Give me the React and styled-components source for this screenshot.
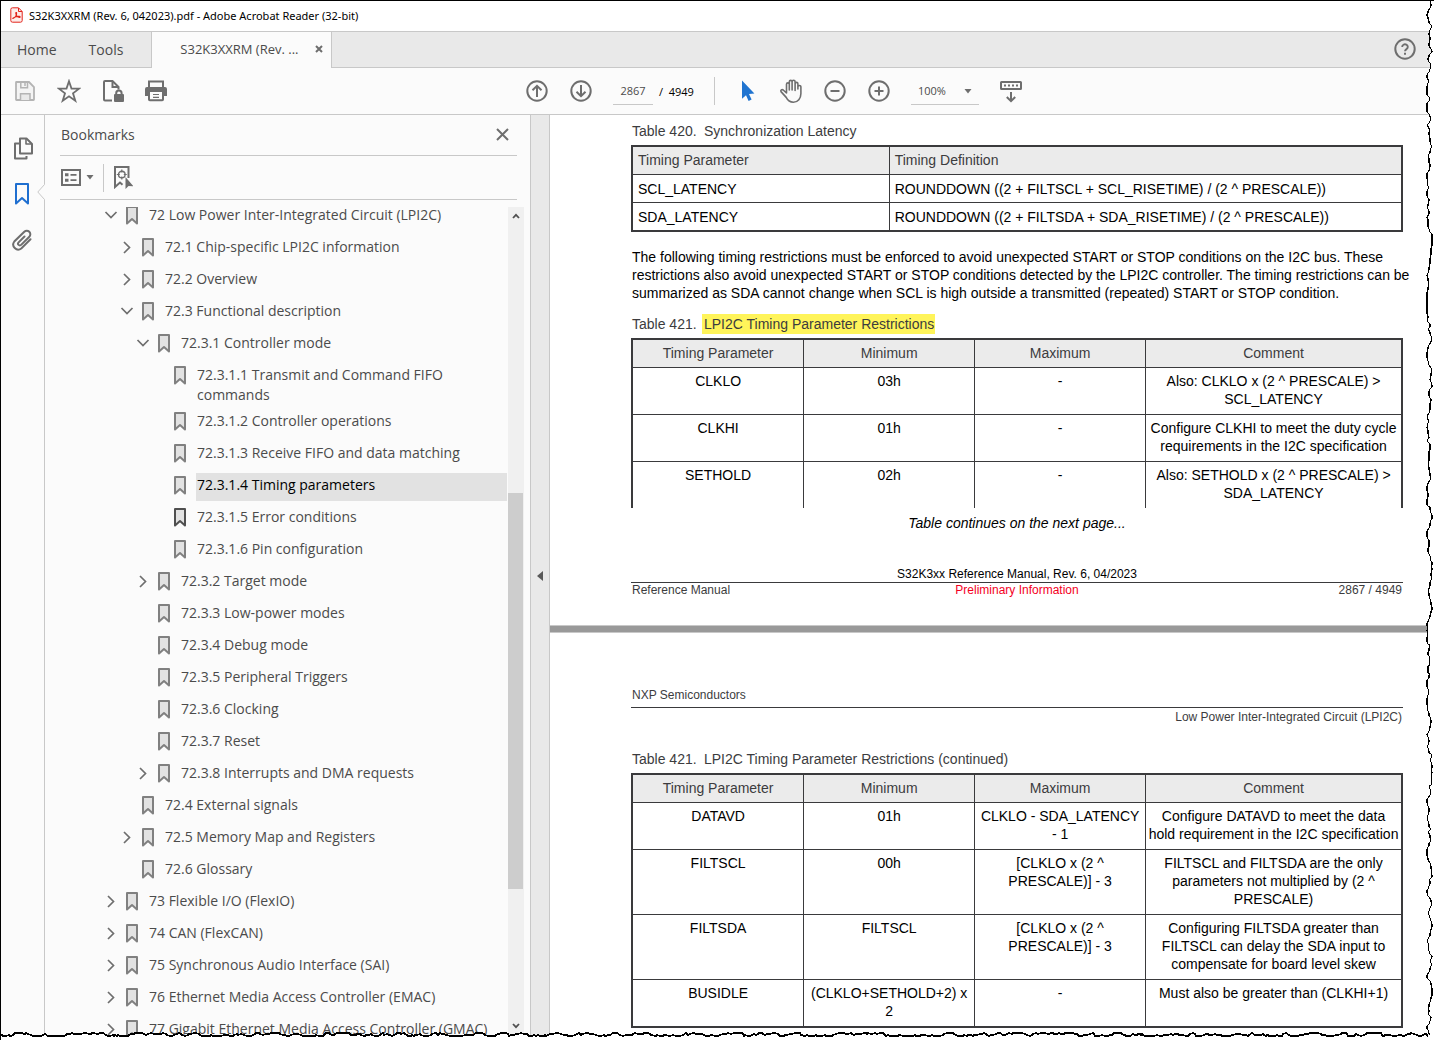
import React from "react";
import styled, { createGlobalStyle, css } from "styled-components";

const UI_FONT = '"Open Sans", "Noto Sans", sans-serif';
const DOC_FONT = '"Liberation Sans", Arial, sans-serif';
const LINE = "#c8c8c8";
const ICON = "#6e6e6e";

const GlobalStyle = createGlobalStyle`
  *, *::before, *::after { box-sizing: border-box; }
  body { margin: 0; background: #ffffff; font-family: ${UI_FONT}; }
  button, input, select { font: inherit; color: inherit; }
`;

/* ---------- shell ---------- */

const Shell = styled.div`
  position: relative;
  display: flex;
  flex-direction: column;
  height: 100vh;
  overflow: hidden;
  border-top: 1px solid #000;
  border-left: 1px solid #000;
  background: #fff;
  color: #4b4b4b;
`;

const TitleBar = styled.header`
  display: flex;
  align-items: center;
  gap: 6px;
  height: 31px;
  padding: 0 0 2px 9px;
  border-bottom: 1px solid ${LINE};
  background: #fff;
  color: #000;
  font-family: "Noto Sans", "Open Sans", sans-serif;
  font-size: 11px;
  flex: none;
`;

const TabBar = styled.nav`
  display: flex;
  height: 36px;
  background: #e9e9e9;
  box-shadow: inset 0 -1px 0 ${LINE};
  font-size: 14px;
  flex: none;
`;

const PlainButton = styled.button`
  display: inline-flex;
  align-items: center;
  justify-content: center;
  padding: 0;
  border: 0;
  background: none;
  cursor: pointer;
`;

const TabLink = styled(PlainButton)`
  padding: 0 16px 2px;
`;

const ActiveTab = styled.div`
  display: flex;
  align-items: center;
  justify-content: space-between;
  width: 181px;
  margin-left: 12px;
  padding: 0 8px 2px 28px;
  border: solid ${LINE};
  border-width: 0 1px;
  background: #fbfbfb;
  font-size: 13px;
`;

const HelpButton = styled(PlainButton)`
  margin-left: auto;
  margin-right: 17px;
  padding-bottom: 2px;
`;

const Toolbar = styled.div`
  display: flex;
  align-items: center;
  height: 47px;
  padding-left: 12px;
  border-bottom: 1px solid ${LINE};
  background: #fbfbfb;
  font-size: 12px;
  flex: none;
`;

const ToolGroup = styled.div`
  display: flex;
  align-items: center;
  gap: 20px;
  margin-left: ${(p) => p.$offset || 0}px;
`;

const IconButton = styled(PlainButton)`
  width: 24px;
  height: 24px;
  flex: none;
`;

const PageField = styled.label`
  display: flex;
  align-items: center;
  gap: 6px;
  color: #000;
  white-space: pre;
  font-size: 11px;
`;

const PageInput = styled.input`
  width: 40px;
  height: 28px;
  padding: 0;
  border: 0;
  border-bottom: 1px solid ${LINE};
  background: none;
  color: #4b4b4b;
  text-align: center;
  outline: none;
`;

const Separator = styled.span`
  width: 1px;
  height: 28px;
  background: ${LINE};
  flex: none;
`;

const ZoomField = styled.label`
  position: relative;
  display: flex;
  align-items: center;
  svg { position: absolute; right: 7px; pointer-events: none; }
`;

const ZoomSelect = styled.select`
  appearance: none;
  width: 68px;
  height: 28px;
  padding: 0 0 0 7px;
  border: 0;
  border-bottom: 1px solid ${LINE};
  border-radius: 0;
  background: none;
  font-size: 11px;
  outline: none;
`;

/* ---------- side panel ---------- */

const Body = styled.div`
  display: flex;
  flex: 1;
  min-height: 0;
`;

const Rail = styled.nav`
  position: relative;
  display: flex;
  flex-direction: column;
  align-items: center;
  gap: 22px;
  width: 44px;
  padding: 21px 1px 0 0;
  border-right: 1px solid ${LINE};
  background: #fbfbfb;
  flex: none;
`;

const Notch = styled.svg`
  position: absolute;
  top: 69px;
  right: -1px;
`;

const Panel = styled.aside`
  display: flex;
  flex-direction: column;
  width: 485px;
  background: #fbfbfb;
  flex: none;
`;

const PanelHead = styled.div`
  display: flex;
  align-items: center;
  justify-content: space-between;
  height: 41px;
  margin: 0 13px 0 15px;
  padding: 0 8px 2px 1px;
  border-bottom: 1px solid ${LINE};
  flex: none;
`;

const PanelTitle = styled.h2`
  margin: 0;
  font-size: 14px;
  font-weight: 400;
`;

const PanelTools = styled.div`
  display: flex;
  align-items: center;
  gap: 9px;
  height: 44px;
  margin: 0 13px 0 15px;
  padding-left: 1px;
  border-bottom: 1px solid ${LINE};
  flex: none;
`;

const OptionsButton = styled(PlainButton)`
  gap: 5px;
`;

const PanelScroll = styled.div`
  display: flex;
  flex: 1;
  min-height: 0;
  margin: 7px 6px 0 0;
  overflow: hidden;
`;

const Tree = styled.ul`
  flex: 1;
  margin: -8px 1px 0 0;
  padding: 0;
  list-style: none;
`;

const TreeRow = styled.li`
  display: flex;
  align-items: flex-start;
  padding-left: ${(p) => 59 + p.$level * 16}px;
`;

const Toggle = styled(PlainButton)`
  width: 14px;
  height: 32px;
  flex: none;
`;

const TreeIcon = styled.span`
  display: flex;
  align-items: center;
  width: 30px;
  height: 32px;
  padding-left: 8px;
  flex: none;
`;

const TreeLabel = styled.a`
  flex: 1;
  min-height: 28px;
  margin-top: 4px;
  padding: 2px 4px 0 1px;
  background: ${(p) => (p.$selected ? "#e2e2e2" : "none")};
  color: ${(p) => (p.$selected ? "#000" : "#4b4b4b")};
  font-size: 14px;
  line-height: 20px;
  text-decoration: none;
`;

const ScrollBar = styled.div`
  display: flex;
  flex-direction: column;
  width: 16px;
  padding-bottom: 5px;
  background: #f0f0f0;
  flex: none;
`;

const ScrollArrow = styled(PlainButton)`
  width: 15px;
  height: 18px;
  flex: none;
`;

const ScrollSpace = styled.span`
  flex: ${(p) => p.$size};
`;

const ScrollThumb = styled.span`
  flex: 397;
  width: 15px;
  background: #cdcdcd;
`;

const Splitter = styled.div`
  display: flex;
  align-items: center;
  justify-content: center;
  width: 20px;
  padding-bottom: 3px;
  border: solid ${LINE};
  border-width: 0 1px;
  background: #e9e9e9;
  flex: none;
`;

/* ---------- document ---------- */

const Document = styled.main`
  flex: 1;
  min-width: 0;
  background: #fff;
  color: #000;
  font-family: ${DOC_FONT};
  font-size: 14px;
  line-height: 18px;
`;

const Sheet = styled.section`
  padding: ${(p) => p.$top}px 31px ${(p) => p.$bottom || 0}px 81px;
`;

const PageGap = styled.div`
  height: 8px;
  border: solid #c8c8c8;
  border-width: 1px 0;
  background: #999;
`;

const DataTable = styled.table`
  width: 100%;
  table-layout: fixed;
  border-collapse: collapse;
  border: 2px solid #3a3a3c;
  text-align: ${(p) => p.$align || "center"};
  ${(p) => p.$open && css`border-bottom: 0;`}
`;

const Caption = styled.caption`
  padding: 0 0 5px 1px;
  color: #3c3c3e;
  text-align: left;
`;

const CaptionNumber = styled.span`
  display: inline-block;
  width: 70px;
`;

const CaptionTitle = styled.span`
  padding: 2px 1px 2px 2px;
  background: ${(p) => (p.$marked ? "#fff45a" : "none")};
`;

const HeadCell = styled.th`
  padding: 4px 5px 5px;
  border: 1px solid #3a3a3c;
  background: #ebebeb;
  color: #3c3c3e;
  font-weight: 400;
`;

const Cell = styled.td`
  padding: ${(p) => (p.$tight ? "5px 4px 4px 5px" : "4px 1px 6px")};
  border: 1px solid #3a3a3c;
  vertical-align: top;
`;

const Paragraph = styled.p`
  margin: 16px 0 13px 1px;
  white-space: nowrap;
`;

const Continues = styled.p`
  margin: 6px 0 0;
  text-align: center;
  font-style: italic;
`;

const Running = styled.div`
  display: grid;
  grid-template-columns: 1fr auto 1fr;
  padding: 0 1px;
  color: #3c3c3e;
  font-size: 12px;
  line-height: 14px;
`;

const FooterTitle = styled.p`
  margin: 35px 0 0;
  padding-bottom: 1px;
  border-bottom: 1px solid #3a3a3c;
  font-size: 12px;
  line-height: 14px;
  text-align: center;
`;

const Red = styled.span`
  color: #f4001e;
`;

const EndText = styled.span`
  text-align: right;
`;

const HeaderName = styled.p`
  margin: 0;
  padding: 0 0 5px 1px;
  border-bottom: 1px solid #3a3a3c;
  color: #3c3c3e;
  font-size: 12px;
  line-height: 14px;
`;

const HeaderChapter = styled.p`
  margin: 2px 0 26px;
  padding-right: 1px;
  color: #3c3c3e;
  font-size: 12px;
  line-height: 14px;
  text-align: right;
`;

/* ---------- torn paper edge ---------- */

const TornRight = styled.svg`
  position: absolute;
  top: -1px;
  right: 0;
  width: 10px;
  height: calc(100% - 4px);
`;

const TornBottom = styled.svg`
  position: absolute;
  left: 0;
  bottom: 0;
  width: calc(100% - 6px);
  height: 10px;
`;

const TornCorner = styled.span`
  position: absolute;
  right: 0;
  bottom: 0;
  width: 6px;
  height: 5px;
  background: #fff;
`;

function tornPoints(length, seed, low, high) {
  let s = seed;
  const next = () => {
    s = (s * 16807) % 2147483647;
    return s / 2147483647;
  };
  const points = [];
  let along = 0;
  let depth = (low + high) / 2;
  let drift = 1;
  while (along < length) {
    points.push([along, Math.round(depth)]);
    along += 1 + Math.floor(next() * 3);
    if (next() < 0.28) drift = -drift;
    depth += drift * next() * 1.5;
    if (depth < low) { depth = low; drift = 1; }
    if (depth > high) { depth = high; drift = -1; }
  }
  return points;
}

const RIGHT_EDGE = tornPoints(3000, 4711, 3, 8);
const BOTTOM_EDGE = tornPoints(4000, 1337, 3, 6);
const toPath = (pts) => "M" + pts.map((p) => p.join(" ")).join("L");
const rightPath = toPath(RIGHT_EDGE.map(([a, d]) => [d, a]));
const bottomPath = toPath(BOTTOM_EDGE);

function TornEdge() {
  return (
    <>
      <TornRight aria-hidden="true">
        <path d={`${rightPath}L10 3000L10 0Z`} fill="#fff" />
        <path d={rightPath} fill="none" stroke="#000" strokeWidth="1.200" shapeRendering="crispEdges" />
      </TornRight>
      <TornBottom aria-hidden="true">
        <path d={`${bottomPath}L4000 10L0 10Z`} fill="#fff" />
        <path d={bottomPath} fill="none" stroke="#000" strokeWidth="1.500" shapeRendering="crispEdges" />
      </TornBottom>
      <TornCorner />
    </>
  );
}

/* ---------- icons ---------- */

const Svg = ({ w = 24, h = 24, children, ...rest }) => (
  <svg width={w} height={h} viewBox={`0 0 ${w} ${h}`} fill="none" stroke={ICON} strokeWidth="2" aria-hidden="true" {...rest}>
    {children}
  </svg>
);

const PdfIcon = () => (
  <Svg w={13} h={16} stroke="#e2231a" strokeWidth="1">
    <path d="M2.5.8h6L12.2 4.500v9q0 1.700-1.700 1.700h-8Q.8 15.200.8 13.500v-11Q.8.8 2.500.8z" fill="#fdecea" />
    <path d="M8.500 1v3.500h3.500" />
    <path d="M3 11.500c2-.6 4-3.500 3.600-5.500-.2-.9-1-.6-.8.3.3 1.900 2 3.900 3.700 4.100.9 0 .8-1-.2-1.100-2-.2-4.300.5-6 1.600-.6.500-.8.800-.3.600z" strokeWidth="1.100" />
  </Svg>
);

const SaveIcon = () => (
  <Svg stroke="#b4b4b4" strokeWidth="1.800">
    <path d="M3.500 3h12.500l5 5v12.500q0 .5-.5.5h-17q-.5 0-.5-.5v-17q0-.5.500-.5z" fill="#f4f4f4" />
    <path d="M7.800 3v5.700h6.700V3" strokeWidth="1.500" />
    <path d="M7.500 21v-6.200h9.500V21" fill="#e9e9e9" strokeWidth="1.500" />
    <path d="M12 4v3" strokeWidth="1.500" />
  </Svg>
);

const StarIcon = () => (
  <Svg strokeWidth="1.800">
    <path d="M12 2.200l2.500 7.300 7.700.1-6.200 4.700 2.300 7.400-6.300-4.400-6.300 4.400L8 14.300 1.800 9.600l7.700-.1z" />
  </Svg>
);

const LockedDocIcon = () => (
  <Svg>
    <path d="M11 21.500H4q-1 0-1-1V3q0-1 1-1h7.500l6 6v2.500" />
    <path d="M11.500 2v6h6" />
    <path d="M15.200 15.500v-1.200a2.700 2.700 0 0 1 5.400 0v1.200" />
    <rect x="13" y="15" width="10" height="8" rx="1" fill={ICON} stroke="none" />
  </Svg>
);

const PrintIcon = () => (
  <Svg>
    <path d="M4 8V2.500h14V8" />
    <path d="M2 8h18q2 0 2 2v7h-4v-4H4v4H0v-7q0-2 2-2z" fill={ICON} stroke="none" />
    <path d="M4 13v7.500q0 .8.800.8h12.400q.8 0 .8-.8V13" />
    <path d="M8 15.500h6M8 18.300h6" strokeWidth="1.200" />
  </Svg>
);

const RoundIcon = ({ children }) => (
  <Svg>
    <circle cx="12" cy="12" r="9.700" />
    {children}
  </Svg>
);

const ArrowCursor = () => (
  <Svg stroke="none">
    <path d="M7 1.500v18.300l4-3.600 2.600 5.800 3-1.400-2.600-5.700 5.400-.4z" fill="#2074d0" />
  </Svg>
);

const HandIcon = () => (
  <Svg strokeWidth="1.600" strokeLinecap="round" strokeLinejoin="round">
    <path d="M7.500 14V5.300a1.400 1.400 0 0 1 2.800 0V11M10.300 10.500V2.800a1.400 1.400 0 0 1 2.800 0V11M13.100 10.500V2.800a1.500 1.500 0 0 1 3 0V11.500M16.100 10.500V4.800a1.400 1.400 0 0 1 2.800 0v5M18.900 10V8a1.500 1.500 0 0 1 3 0v6.500c0 5-3 8.700-7.500 8.700-3.700 0-5.700-1.800-7.200-4.800L2 12.600c-.7-1.300.9-2.600 2.200-1.600L7.500 14" />
  </Svg>
);

const ScrollDownIcon = () => (
  <Svg>
    <rect x="2" y="3" width="20" height="7" rx=".5" />
    <path d="M5 6.500h14" strokeDasharray="2 2" />
    <path d="M12 13v9M7.800 18l4.200 4.200 4.200-4.200" />
  </Svg>
);

const HelpIcon = () => (
  <Svg>
    <circle cx="12" cy="12" r="9.700" />
    <path d="M9.200 10a2.800 2.600 0 1 1 4.300 2.100c-1 .7-1.500 1.100-1.500 2.200" strokeWidth="1.900" />
    <path d="M12 15.800v2" />
  </Svg>
);

const Caret = () => (
  <Svg w={8} h={5} stroke="none">
    <path d="M.5 0h7L4 4.500z" fill={ICON} />
  </Svg>
);

const CrossIcon = ({ size, weight }) => (
  <Svg w={size} h={size} strokeWidth={weight}>
    <path d={`M1 1L${size - 1} ${size - 1}M${size - 1} 1L1 ${size - 1}`} />
  </Svg>
);

const PagesIcon = () => (
  <Svg strokeLinejoin="round">
    <path d="M10 2.500h6.500L22 8v9.500H10z" fill="#fbfbfb" />
    <path d="M16 2.500V8h6" strokeWidth="1.600" />
    <path d="M10 7.500H5V22.500h11.500V20" />
  </Svg>
);

const ActiveBookmarkIcon = () => (
  <Svg stroke="#1f6fd0">
    <path d="M6 2h12v19.500l-6-5.500-6 5.500z" strokeLinejoin="round" />
  </Svg>
);

const ClipIcon = () => (
  <Svg strokeLinecap="round">
    <path d="M14.500 8.500L8.600 14.400a1.700 1.700 0 0 0 2.500 2.500l8.200-8.200a3.500 3.500 0 0 0-5-5L4.300 13.500a5 5 0 0 0 7 7l9.200-9.200" />
  </Svg>
);

const OptionsIcon = () => (
  <Svg w={20} h={17}>
    <rect x="1" y="1" width="18" height="15" />
    <path d="M4 5.800h3.500M4 11.200h3.500" strokeWidth="3" />
    <path d="M9.500 5.800h6M9.500 11.200h6" strokeWidth="1.800" />
  </Svg>
);

const FindBookmarkIcon = () => (
  <Svg w={20} h={23}>
    <path d="M15.500 12V1H2v20l5-4.500 2.500 2.200" />
    <circle cx="8.800" cy="8.500" r="3.300" strokeWidth="1.400" />
    <path d="M8.800 3.500v3M8.800 10.500v3M3.800 8.500h3M10.800 8.500h3" strokeWidth="1.200" />
    <path d="M12.500 11v12l3-3 5 .2z" fill={ICON} stroke="none" />
  </Svg>
);

const BookmarkIcon = ({ dark }) => (
  <Svg w={12} h={19} stroke={dark ? "#4f4f4f" : "#808080"}>
    <path d="M1 1h10v16.500L6 13l-5 4.500z" fill="#e2e2e2" strokeLinejoin="round" />
  </Svg>
);

const Chevron = ({ open }) =>
  open ? (
    <Svg w={14} h={8} strokeWidth="1.700"><path d="M1.500 1L7 6.500 12.500 1" /></Svg>
  ) : (
    <Svg w={8} h={13} strokeWidth="1.700"><path d="M1 1l5.500 5.500L1 12" /></Svg>
  );

const ScrollChevron = ({ down }) => (
  <Svg w={8} h={6} stroke="#505050" strokeWidth="1.800">
    <path d={down ? "M1 1l3 3.200L7 1" : "M1 5l3-3.200L7 5"} />
  </Svg>
);

/* ---------- data ---------- */

const BOOKMARKS = [
  [0, "open", "72 Low Power Inter-Integrated Circuit (LPI2C)"],
  [1, "closed", "72.1 Chip-specific LPI2C information"],
  [1, "closed", "72.2 Overview"],
  [1, "open", "72.3 Functional description"],
  [2, "open", "72.3.1 Controller mode"],
  [3, "", "72.3.1.1 Transmit and Command FIFO commands"],
  [3, "", "72.3.1.2 Controller operations"],
  [3, "", "72.3.1.3 Receive FIFO and data matching"],
  [3, "", "72.3.1.4 Timing parameters", "selected"],
  [3, "", "72.3.1.5 Error conditions", "dark"],
  [3, "", "72.3.1.6 Pin configuration"],
  [2, "closed", "72.3.2 Target mode"],
  [2, "", "72.3.3 Low-power modes"],
  [2, "", "72.3.4 Debug mode"],
  [2, "", "72.3.5 Peripheral Triggers"],
  [2, "", "72.3.6 Clocking"],
  [2, "", "72.3.7 Reset"],
  [2, "closed", "72.3.8 Interrupts and DMA requests"],
  [1, "", "72.4 External signals"],
  [1, "closed", "72.5 Memory Map and Registers"],
  [1, "", "72.6 Glossary"],
  [0, "closed", "73 Flexible I/O (FlexIO)"],
  [0, "closed", "74 CAN (FlexCAN)"],
  [0, "closed", "75 Synchronous Audio Interface (SAI)"],
  [0, "closed", "76 Ethernet Media Access Controller (EMAC)"],
  [0, "closed", "77 Gigabit Ethernet Media Access Controller (GMAC)"],
];

const LATENCY = [
  ["SCL_LATENCY", "ROUNDDOWN ((2 + FILTSCL + SCL_RISETIME) / (2 ^ PRESCALE))"],
  ["SDA_LATENCY", "ROUNDDOWN ((2 + FILTSDA + SDA_RISETIME) / (2 ^ PRESCALE))"],
];

const TIMING_NOTE =
  "The following timing restrictions must be enforced to avoid unexpected START or STOP conditions on the I2C bus. These\n" +
  "restrictions also avoid unexpected START or STOP conditions detected by the LPI2C controller. The timing restrictions can be\n" +
  "summarized as SDA cannot change when SCL is high outside a transmitted (repeated) START or STOP condition.";

const RESTRICTIONS = [
  ["CLKLO", "03h", "-", "Also: CLKLO x (2 ^ PRESCALE) >\nSCL_LATENCY"],
  ["CLKHI", "01h", "-", "Configure CLKHI to meet the duty cycle\nrequirements in the I2C specification"],
  ["SETHOLD", "02h", "-", "Also: SETHOLD x (2 ^ PRESCALE) >\nSDA_LATENCY"],
];

const RESTRICTIONS_CONTINUED = [
  ["DATAVD", "01h", "CLKLO - SDA_LATENCY\n- 1", "Configure DATAVD to meet the data\nhold requirement in the I2C specification"],
  ["FILTSCL", "00h", "[CLKLO x (2 ^\nPRESCALE)] - 3", "FILTSCL and FILTSDA are the only\nparameters not multiplied by (2 ^\nPRESCALE)"],
  ["FILTSDA", "FILTSCL", "[CLKLO x (2 ^\nPRESCALE)] - 3", "Configuring FILTSDA greater than\nFILTSCL can delay the SDA input to\ncompensate for board level skew"],
  ["BUSIDLE", "(CLKLO+SETHOLD+2) x\n2", "-", "Must also be greater than (CLKHI+1)"],
];

const lines = (text) =>
  text.split("\n").map((line, i) => (
    <React.Fragment key={i}>
      {i > 0 && <br />}
      {line}
    </React.Fragment>
  ));

function RestrictionTable({ title, rows, marked, open }) {
  return (
    <DataTable $open={open}>
      <Caption>
        <CaptionNumber>Table 421.</CaptionNumber>
        <CaptionTitle $marked={marked}>{title}</CaptionTitle>
      </Caption>
      <colgroup>
        <col width="22.3%" />
        <col width="22.2%" />
        <col width="22.2%" />
        <col />
      </colgroup>
      <thead>
        <tr>
          {["Timing Parameter", "Minimum", "Maximum", "Comment"].map((h) => (
            <HeadCell key={h} scope="col">{h}</HeadCell>
          ))}
        </tr>
      </thead>
      <tbody>
        {rows.map((row, r) => (
          <tr key={row[0]}>
            {row.map((text, i) => (
              <Cell key={i} style={open && r === rows.length - 1 ? { borderBottom: "hidden" } : undefined}>
                {lines(text)}
              </Cell>
            ))}
          </tr>
        ))}
      </tbody>
    </DataTable>
  );
}

export default function App() {
  return (
    <Shell>
      <GlobalStyle />
      <TitleBar>
        <PdfIcon />
        <span>S32K3XXRM (Rev. 6, 042023).pdf - Adobe Acrobat Reader (32-bit)</span>
      </TitleBar>

      <TabBar>
        <TabLink>Home</TabLink>
        <TabLink>Tools</TabLink>
        <ActiveTab>
          <span>S32K3XXRM (Rev. ...</span>
          <PlainButton aria-label="Close tab"><CrossIcon size={8} weight={2} /></PlainButton>
        </ActiveTab>
        <HelpButton aria-label="Help"><HelpIcon /></HelpButton>
      </TabBar>

      <Toolbar>
        <ToolGroup>
          <IconButton aria-label="Save"><SaveIcon /></IconButton>
          <IconButton aria-label="Star"><StarIcon /></IconButton>
          <IconButton aria-label="Protected file"><LockedDocIcon /></IconButton>
          <IconButton aria-label="Print"><PrintIcon /></IconButton>
        </ToolGroup>
        <ToolGroup $offset={356}>
          <IconButton aria-label="Previous page"><RoundIcon><path d="M12 18V7M7.500 11.300L12 6.800l4.500 4.500" /></RoundIcon></IconButton>
          <IconButton aria-label="Next page"><RoundIcon><path d="M12 6v11M7.500 12.700l4.500 4.500 4.500-4.500" /></RoundIcon></IconButton>
          <PageField>
            <PageInput defaultValue="2867" aria-label="Page number" />
            <span>/  4949</span>
          </PageField>
          <Separator />
          <IconButton aria-label="Select"><ArrowCursor /></IconButton>
          <IconButton aria-label="Pan"><HandIcon /></IconButton>
          <IconButton aria-label="Zoom out"><RoundIcon><path d="M7.500 12h9" /></RoundIcon></IconButton>
          <IconButton aria-label="Zoom in"><RoundIcon><path d="M7.500 12h9M12 7.500v9" /></RoundIcon></IconButton>
          <ZoomField>
            <ZoomSelect defaultValue="100%" aria-label="Zoom level">
              <option>50%</option>
              <option>100%</option>
              <option>200%</option>
            </ZoomSelect>
            <Caret />
          </ZoomField>
          <IconButton aria-label="Scrolling mode"><ScrollDownIcon /></IconButton>
        </ToolGroup>
      </Toolbar>

      <Body>
        <Rail>
          <IconButton aria-label="Page thumbnails"><PagesIcon /></IconButton>
          <IconButton aria-label="Bookmarks"><ActiveBookmarkIcon /></IconButton>
          <IconButton aria-label="Attachments"><ClipIcon /></IconButton>
          <Notch width="8" height="16" viewBox="0 0 8 16" aria-hidden="true">
            <path d="M8 0v16L1 8z" fill="#fbfbfb" />
            <path d="M7.500 .500L.800 8l6.700 7.500" fill="none" stroke={LINE} />
          </Notch>
        </Rail>

        <Panel>
          <PanelHead>
            <PanelTitle>Bookmarks</PanelTitle>
            <PlainButton aria-label="Close panel"><CrossIcon size={13} weight={2} /></PlainButton>
          </PanelHead>
          <PanelTools>
            <OptionsButton aria-label="Options"><OptionsIcon /><Caret /></OptionsButton>
            <Separator />
            <PlainButton aria-label="Find current bookmark"><FindBookmarkIcon /></PlainButton>
          </PanelTools>
          <PanelScroll>
            <Tree>
              {BOOKMARKS.map(([level, state, text, mark]) => (
                <TreeRow key={text} $level={level}>
                  <Toggle as={state ? "button" : "span"} aria-label={state ? "Toggle" : undefined}>
                    {state && <Chevron open={state === "open"} />}
                  </Toggle>
                  <TreeIcon><BookmarkIcon dark={mark === "dark"} /></TreeIcon>
                  <TreeLabel href="#" $selected={mark === "selected"}>{text}</TreeLabel>
                </TreeRow>
              ))}
            </Tree>
            <ScrollBar>
              <ScrollArrow aria-label="Scroll up"><ScrollChevron /></ScrollArrow>
              <ScrollSpace $size={268} />
              <ScrollThumb />
              <ScrollSpace $size={128} />
              <ScrollArrow aria-label="Scroll down"><ScrollChevron down /></ScrollArrow>
            </ScrollBar>
          </PanelScroll>
        </Panel>

        <Splitter>
          <Svg w={6} h={10} stroke="none"><path d="M6 0v10L0 5z" fill="#5a5a5a" /></Svg>
        </Splitter>

        <Document>
          <Sheet $top={7} $bottom={28}>
            <DataTable $align="left">
              <Caption>
                <CaptionNumber>Table 420.</CaptionNumber>
                <CaptionTitle>Synchronization Latency</CaptionTitle>
              </Caption>
              <colgroup>
                <col width="33.4%" />
                <col />
              </colgroup>
              <thead>
                <tr>
                  <HeadCell scope="col">Timing Parameter</HeadCell>
                  <HeadCell scope="col">Timing Definition</HeadCell>
                </tr>
              </thead>
              <tbody>
                {LATENCY.map(([name, value]) => (
                  <tr key={name}>
                    <Cell $tight>{name}</Cell>
                    <Cell $tight>{value}</Cell>
                  </tr>
                ))}
              </tbody>
            </DataTable>
            <Paragraph>{lines(TIMING_NOTE)}</Paragraph>
            <RestrictionTable title="LPI2C Timing Parameter Restrictions" rows={RESTRICTIONS} marked open />
            <Continues>Table continues on the next page...</Continues>
            <FooterTitle>S32K3xx Reference Manual, Rev. 6, 04/2023</FooterTitle>
            <Running>
              <span>Reference Manual</span>
              <Red>Preliminary Information</Red>
              <EndText>2867 / 4949</EndText>
            </Running>
          </Sheet>
          <PageGap />
          <Sheet $top={55}>
            <HeaderName>NXP Semiconductors</HeaderName>
            <HeaderChapter>Low Power Inter-Integrated Circuit (LPI2C)</HeaderChapter>
            <RestrictionTable title="LPI2C Timing Parameter Restrictions (continued)" rows={RESTRICTIONS_CONTINUED} />
          </Sheet>
        </Document>
      </Body>
      <TornEdge />
    </Shell>
  );
}
